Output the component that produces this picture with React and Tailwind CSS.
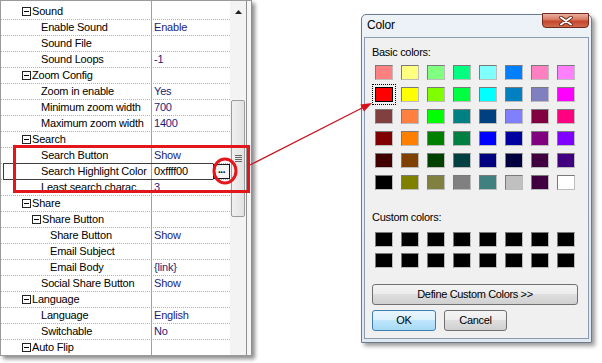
import React from "react";

const ROWS = [
  { c: 0, t: "Sound" },
  { l: 1, t: "Enable Sound", v: "Enable" },
  { l: 1, t: "Sound File", v: "" },
  { l: 1, t: "Sound Loops", v: "-1" },
  { c: 0, t: "Zoom Config" },
  { l: 1, t: "Zoom in enable", v: "Yes" },
  { l: 1, t: "Minimum zoom width", v: "700" },
  { l: 1, t: "Maximum zoom width", v: "1400" },
  { c: 0, t: "Search" },
  { l: 1, t: "Search Button", v: "Show" },
  { l: 1, t: "Search Highlight Color", v: "0xffff00", sel: true },
  { l: 1, t: "Least search charac...", v: "3" },
  { c: 0, t: "Share" },
  { c: 1, t: "Share Button" },
  { l: 2, t: "Share Button", v: "Show" },
  { l: 2, t: "Email Subject", v: "" },
  { l: 2, t: "Email Body", v: "{link}" },
  { l: 1, t: "Social Share Button", v: "Show" },
  { c: 0, t: "Language" },
  { l: 1, t: "Language", v: "English" },
  { l: 1, t: "Switchable", v: "No" },
  { c: 0, t: "Auto Flip" },
];

const BASIC = [
  ["#FF8080", "#FFFF80", "#80FF80", "#00FF80", "#80FFFF", "#0080FF", "#FF80C0", "#FF80FF"],
  ["#FF0000", "#FFFF00", "#80FF00", "#00FF40", "#00FFFF", "#0080C0", "#8080C0", "#FF00FF"],
  ["#804040", "#FF8040", "#00FF00", "#008080", "#004080", "#8080FF", "#800040", "#FF0080"],
  ["#800000", "#FF8000", "#008000", "#008040", "#0000FF", "#0000A0", "#800080", "#8000FF"],
  ["#400000", "#804000", "#004000", "#004040", "#000080", "#000040", "#400040", "#400080"],
  ["#000000", "#808000", "#808040", "#808080", "#408080", "#C0C0C0", "#400040", "#FFFFFF"],
];

function MinusBox() {
  return (
    <span className="mr-px flex h-[9px] w-[9px] shrink-0 items-center justify-center border border-[#222] bg-white">
      <span className="h-px w-[5px] bg-black" />
    </span>
  );
}

function Row({ r }) {
  let pad = "pl-[40px]";
  if (r.c === 0) pad = "pl-[21px]";
  else if (r.c === 1) pad = "pl-[31px]";
  else if (r.l === 2) pad = "pl-[49px]";
  return (
    <div className="relative flex h-[16px] shrink-0 border-b border-dotted border-[#b0b0b0]">
      <div className={`flex w-[151px] shrink-0 items-center whitespace-nowrap border-r border-solid border-[#a0a0a0] text-black ${pad}`}>
        {r.c !== undefined && <MinusBox />}
        <span>{r.t}</span>
      </div>
      <div className={`flex flex-1 items-center justify-between pl-[2px] ${r.sel ? "text-black" : "text-[#1c1c7c]"}`}>
        <span>{r.v}</span>
        {r.sel && (
          <span className="flex h-[15px] w-[17px] items-center justify-center border border-[#1a1a1a] bg-[#f4f4f4] pb-[3px] text-[10px] font-bold leading-none tracking-[-0.5px]">
            ...
          </span>
        )}
      </div>
      {r.sel && (
        <div className="pointer-events-none absolute -top-px bottom-[-1px] left-[2px] right-[17px] border border-r-0 border-[#3c3c3c]" />
      )}
    </div>
  );
}

function PropertyPanel() {
  return (
    <div className="flex h-[356px] w-[252px] shrink-0 overflow-hidden border-b border-l border-t border-[#9a9a9a] bg-white text-[11px] leading-[15px] tracking-[-0.2px] shadow-[3px_3px_4px_rgba(0,0,0,0.45)]">
      <div className="flex w-[229px] flex-col">
        <div className="flex h-[3px] shrink-0">
          <div className="w-[151px] border-r border-[#a0a0a0]" />
        </div>
        {ROWS.map((r, i) => (
          <Row key={i} r={r} />
        ))}
      </div>
      <div className="flex w-[16px] flex-col bg-[#f3f3f3]">
        <div className="flex h-[21px] items-center justify-center">
          <svg width="7" height="4" viewBox="0 0 7 4">
            <path d="M3.5 0 L7 4 L0 4 Z" fill="#222" />
          </svg>
        </div>
        <div className="mx-px mt-[78px] flex h-[117px] items-center justify-center rounded-[2px] border border-[#9b9b9b] bg-[linear-gradient(90deg,#f0f0f0,#e2e2e2)]">
          <div className="flex flex-col gap-[1px]">
            <div className="h-px w-[7px] bg-[#666]" />
            <div className="h-px w-[7px] bg-[#666]" />
            <div className="h-px w-[7px] bg-[#666]" />
            <div className="h-px w-[7px] bg-[#666]" />
          </div>
        </div>
      </div>
      <div className="w-[6px] border-l border-r border-[#8f8f8f] bg-[#f6f6f6]" />
    </div>
  );
}

function Swatch({ color, sel }) {
  return (
    <div
      className={`h-[15px] w-[18px] border ${
        sel
          ? "border-black outline-1 outline-offset-2 outline-dotted outline-black"
          : "border-[#7a7a7a] border-b-[#bcbcbc] border-r-[#bcbcbc]"
      }`}
      style={{ backgroundColor: color }}
    />
  );
}

function WinButton({ children, className, primary }) {
  return (
    <div
      className={`flex items-center justify-center rounded-[3px] border text-[11px] text-black ${
        primary
          ? "border-[#3c7fb1] bg-[linear-gradient(#eaf6fd,#d9f0fc_50%,#bee6fd_50%,#a7d9f5)]"
          : "border-[#707070] bg-[linear-gradient(#f4f4f4,#ececec_50%,#dedede_50%,#d0d0d0)]"
      } ${className}`}
    >
      {children}
    </div>
  );
}

function ColorDialog() {
  return (
    <div className="ml-[109px] mt-[14px] flex h-[329px] w-[231px] shrink-0 flex-col rounded-t-[5px] border border-[#6b7a8c] bg-[linear-gradient(#edf2f7,#dfe7f0)] shadow-[3px_3px_4px_rgba(0,0,0,0.4)]">
      <div className="flex h-[22px] items-start justify-between pl-[5px]">
        <span className="mt-[3px] text-[12px] leading-[14px] tracking-[-0.2px] text-black">Color</span>
        <div className="mr-[2px] mt-[-2px] flex h-[15px] w-[47px] items-center justify-center rounded-b-[4px] border border-[#6e2a1c] bg-[linear-gradient(#eab0a0,#d8765e_45%,#c4452b_55%,#d36a4e)]">
          <svg width="14" height="10" viewBox="0 0 14 10">
            <path d="M2 1.5 L12 8.5 M12 1.5 L2 8.5" stroke="#5a2216" strokeWidth="3.6" strokeLinecap="round" />
            <path d="M2 1.5 L12 8.5 M12 1.5 L2 8.5" stroke="#ffffff" strokeWidth="2" strokeLinecap="round" />
          </svg>
        </div>
      </div>
      <div className="mx-[2px] mb-[3px] flex flex-1 flex-col border border-[#8b9cb2] bg-[#f0f0f0] pl-[7px] pt-[8px] text-[11px] leading-[13px] tracking-[-0.3px] text-black">
        <div>Basic colors:</div>
        <div className="ml-[3px] mt-[6px] grid grid-cols-[repeat(8,18px)] gap-x-[8px] gap-y-[7px]">
          {BASIC.map((row, ri) =>
            row.map((c, ci) => <Swatch key={`${ri}-${ci}`} color={c} sel={ri === 1 && ci === 0} />)
          )}
        </div>
        <div className="mt-[21px]">Custom colors:</div>
        <div className="ml-[3px] mt-[8px] grid grid-cols-[repeat(8,18px)] gap-x-[8px] gap-y-[6px]">
          {Array.from({ length: 16 }).map((_, i) => (
            <Swatch key={i} color="#000000" />
          ))}
        </div>
        <WinButton className="mt-[16px] h-[21px] w-[206px] tracking-[-0.35px]">Define Custom Colors &gt;&gt;</WinButton>
        <div className="mt-[5px] flex gap-[8px]">
          <WinButton primary className="h-[21px] w-[64px]">OK</WinButton>
          <WinButton className="h-[21px] w-[63px]">Cancel</WinButton>
        </div>
      </div>
    </div>
  );
}

export default function App() {
  return (
    <div className="relative flex h-[363px] w-[602px] overflow-hidden bg-white font-['Liberation_Sans',Arial,sans-serif]">
      <PropertyPanel />
      <ColorDialog />
      <svg className="pointer-events-none absolute left-0 top-0" width="602" height="363" viewBox="0 0 602 363">
        <rect x="14.5" y="146.5" width="234" height="45" fill="none" stroke="#e3161b" strokeWidth="3" />
        <ellipse cx="225" cy="171" rx="11" ry="12" fill="none" stroke="#e3161b" strokeWidth="3" />
        <line x1="250" y1="165" x2="363" y2="107.5" stroke="#c8101a" strokeWidth="1.2" />
        <polygon points="372,103 364,111.6 360.4,104.4" fill="#d8101a" />
      </svg>
    </div>
  );
}
